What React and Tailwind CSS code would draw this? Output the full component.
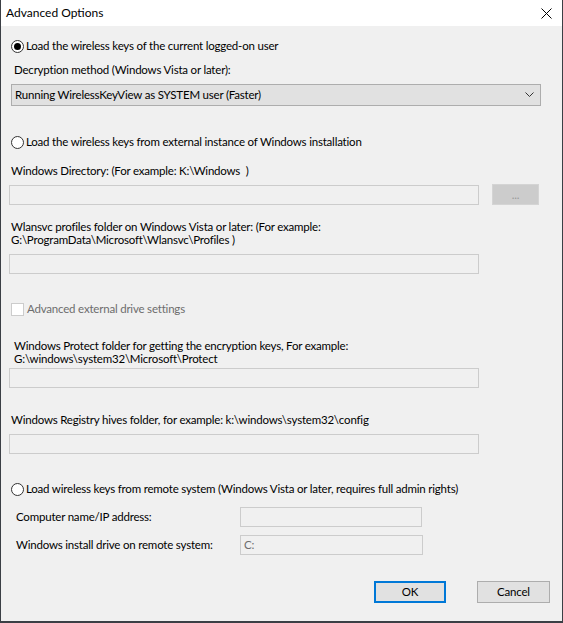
import React from "react";

const font = { fontFamily: 'Lato, "Noto Sans", sans-serif' };

function Radio({ checked, children }) {
  return (
    <div className="flex h-4 items-center">
      <span className="flex h-[13px] w-[13px] items-center justify-center rounded-full border border-[#333] bg-white">
        {checked && <span className="h-[7px] w-[7px] rounded-full bg-[#000]" />}
      </span>
      <span className="ml-[2px]">{children}</span>
    </div>
  );
}

function Field({ className = "", children }) {
  return (
    <div className={`h-5 border border-[#cccccc] bg-[#f0f0f0] px-[3px] text-[#6d6d6d] leading-[18px] ${className}`}>
      {children}
    </div>
  );
}

export default function App() {
  return (
    <div
      className="h-[623px] w-[563px] overflow-hidden border-x border-b-2 border-[#3b3f45] bg-[#f0f0f0] text-[11.5px] tracking-[-0.2px] text-black"
      style={font}
    >
      <div className="flex h-[26px] items-center justify-between bg-white pl-[5px] pr-[10px] text-[12px] tracking-normal">
        <span>Advanced Options</span>
        <svg width="11" height="11" viewBox="0 0 11 11" className="mt-[1px]">
          <path d="M0.5 0.5 L10.5 10.5 M10.5 0.5 L0.5 10.5" stroke="#000" strokeWidth="1" />
        </svg>
      </div>

      <div className="pl-[10px] pr-[22px]">
        <div className="pt-[12px]">
          <Radio checked>Load the wireless keys of the current logged-on user</Radio>
        </div>
        <div className="mt-[8px] flex h-4 items-center pl-[3px]">
          Decryption method (Windows Vista or later):
        </div>
        <div className="mt-[6px] flex h-[22px] w-[530px] items-center justify-between border border-[#adadad] bg-[#e1e1e1] pl-[3px] pr-[6px]">
          <span>Running WirelessKeyView as SYSTEM user (Faster)</span>
          <svg width="9" height="6" viewBox="0 0 9 6">
            <path d="M0.5 0.5 L4.5 4.5 L8.5 0.5" fill="none" stroke="#333" strokeWidth="1" />
          </svg>
        </div>

        <div className="mt-[28px]">
          <Radio>Load the wireless keys from external instance of Windows installation</Radio>
        </div>
        <div className="mt-[13px] flex h-4 items-center">
          Windows Directory: (For example: K:\Windows&nbsp;&nbsp;)
        </div>
        <div className="-ml-[2px] mt-[6px] flex items-start">
          <Field className="w-[470px]" />
          <div className="ml-[13px] -mt-[1px] flex h-[21px] w-[47px] items-center justify-center border border-[#d4d4d4] bg-[#cccccc] text-[#9a9a9a]">
            ...
          </div>
        </div>

        <div className="mt-[15px] leading-[13px]">
          <div>Wlansvc profiles folder on Windows Vista or later: (For example:</div>
          <div>G:\ProgramData\Microsoft\Wlansvc\Profiles )</div>
        </div>
        <Field className="-ml-[2px] mt-[8px] w-[470px]" />

        <div className="mt-[27px] flex h-4 items-center">
          <span className="h-[13px] w-[13px] border border-[#cccccc] bg-white" />
          <span className="ml-[3px] text-[#6d6d6d]">Advanced external drive settings</span>
        </div>

        <div className="mt-[22px] pl-[3px] leading-[13px]">
          <div>Windows Protect folder for getting the encryption keys, For example:</div>
          <div>G:\windows\system32\Microsoft\Protect</div>
        </div>
        <Field className="-ml-[2px] mt-[3px] w-[470px]" />

        <div className="mt-[24px] flex h-4 items-center">
          Windows Registry hives folder, for example: k:\windows\system32\config
        </div>
        <Field className="-ml-[2px] mt-[6px] w-[470px]" />

        <div className="mt-[27px]">
          <Radio>Load wireless keys from remote system (Windows Vista or later, requires full admin rights)</Radio>
        </div>

        <div className="mt-[10px] flex items-center pl-[5px]">
          <span className="w-[224px]">Computer name/IP address:</span>
          <Field className="w-[182px]" />
        </div>
        <div className="mt-[8px] flex items-center pl-[5px]">
          <span className="w-[224px]">Windows install drive on remote system:</span>
          <Field className="w-[183px]">C:</Field>
        </div>

        <div className="mt-[26px] flex justify-end">
          <div className="flex h-[22px] w-[72px] items-center justify-center border-2 border-[#0078d7] bg-[#e1e1e1]">
            OK
          </div>
          <div className="ml-[31px] -mr-[10px] flex h-[22px] w-[73px] items-center justify-center border border-[#adadad] bg-[#e1e1e1]">
            Cancel
          </div>
        </div>
      </div>
    </div>
  );
}
